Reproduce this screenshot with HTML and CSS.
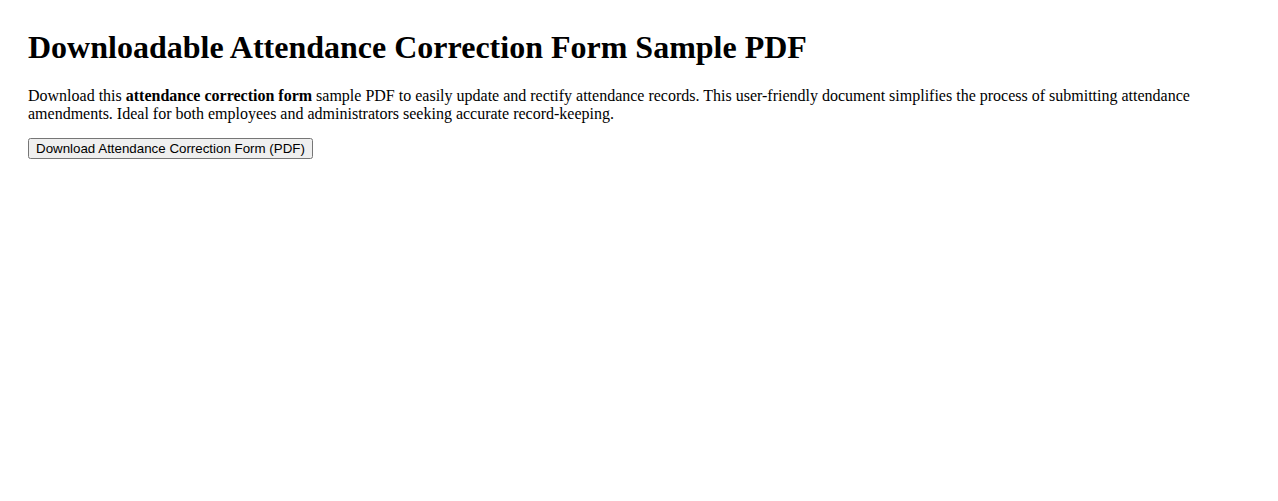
FILE: index.html
```html
<!DOCTYPE html>
<html lang="en">
<head>
<meta charset="utf-8">
<title>Attendance Correction Form</title>
<link rel="stylesheet" href="styles.css">
</head>
<body>
<div class="page">
<h1 class="title">Downloadable Attendance Correction Form Sample PDF</h1>
<p class="intro">Download this <strong>attendance correction form</strong> sample PDF to easily update and rectify attendance records. This user-friendly document simplifies the process of submitting attendance amendments. Ideal for both employees and administrators seeking accurate record-keeping.</p>
<button class="download" type="button">Download Attendance Correction Form (PDF)</button>
</div>
</body>
</html>
```
FILE: styles.css
```css
body {
  margin: 0;
  font-family: "Liberation Serif", "Times New Roman", serif;
  font-size: 16px;
  color: #000;
  background: #fff;
}
.page {
  padding: 8px 28px;
}
.title {
  font-size: 32px;
  font-weight: bold;
  margin: 21px 0;
}
.intro {
  margin: 16px 0 15px;
}
.download {
  font-family: "Liberation Sans", Arial, sans-serif;
  font-size: 13.333px;
}
```
